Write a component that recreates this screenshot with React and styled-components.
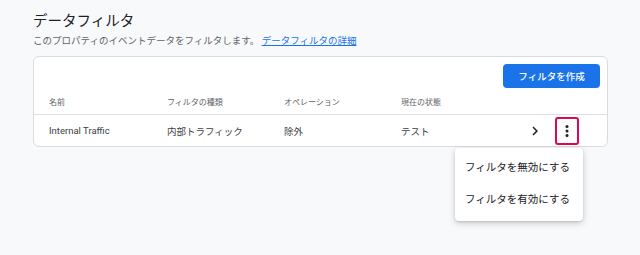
import React from "react";
import styled, { createGlobalStyle } from "styled-components";

const GlobalStyle = createGlobalStyle`
  html, body {
    margin: 0;
    padding: 0;
    background: #f8f9fa;
  }
  body {
    font-family: Roboto, "Noto Sans CJK JP", sans-serif;
    color: #202124;
  }
`;

const Page = styled.div`
  padding: 12px 0 0 33px;
  height: 243px;
`;

const Title = styled.h1`
  margin: 0;
  font-size: 14.5px;
  line-height: 20px;
  font-weight: 400;
  color: #202124;
`;

const Subtitle = styled.p`
  margin: 2px 0 0;
  font-size: 9.5px;
  line-height: 14px;
  color: #5f6368;
`;

const DocLink = styled.a`
  color: #1a73e8;
  text-decoration: underline;
`;

const Card = styled.div`
  margin-top: 8px;
  width: 575px;
  box-sizing: border-box;
  background: #fff;
  border: 1px solid #dadce0;
  border-radius: 6px;
`;

const Toolbar = styled.div`
  display: flex;
  justify-content: flex-end;
  padding: 7px 7px 0;
`;

const PrimaryButton = styled.button`
  height: 24px;
  width: 97px;
  border: none;
  border-radius: 4px;
  background: #1a73e8;
  color: #fff;
  font-family: inherit;
  font-size: 9.5px;
  font-weight: 500;
  cursor: pointer;
`;

const Row = styled.div`
  display: grid;
  grid-template-columns: 118px 117px 117px 1fr auto;
  align-items: center;
  padding: 0 28px 0 15px;
  height: ${(p) => (p.$head ? "26px" : "31px")};
  border-bottom: ${(p) => (p.$head ? "1px solid #e0e0e0" : "none")};
  font-size: ${(p) => (p.$head ? "8px" : "9.5px")};
  color: ${(p) => (p.$head ? "#5f6368" : "#3c4043")};
`;

const Cell = styled.div`
  white-space: nowrap;
`;

const Actions = styled.div`
  display: flex;
  align-items: center;
  gap: 11px;
`;

const IconBox = styled.span`
  display: flex;
  align-items: center;
  justify-content: center;
  width: 18px;
  height: 18px;
  color: #202124;
`;

const MenuAnchor = styled.div`
  position: relative;
`;

const KebabButton = styled.button`
  display: flex;
  align-items: center;
  justify-content: center;
  width: 24px;
  height: 28px;
  padding: 0;
  box-sizing: border-box;
  border: 2px solid #dc0a4f;
  border-radius: 3px;
  background: #fff;
  color: #202124;
  cursor: pointer;
`;

const Menu = styled.ul`
  position: absolute;
  top: calc(100% + 3px);
  right: -4px;
  width: 128px;
  margin: 0;
  padding: 4px 0 5px;
  list-style: none;
  background: #fff;
  border-radius: 4px;
  box-shadow: 0 2px 6px rgba(60, 64, 67, 0.25), 0 1px 2px rgba(60, 64, 67, 0.15);
  z-index: 2;
`;

const MenuItem = styled.li`
  padding: 0 10px;
  line-height: 32px;
  font-size: 10.5px;
  color: #202124;
  white-space: nowrap;
`;

const Chevron = () => (
  <svg width="18" height="18" viewBox="0 0 24 24" fill="currentColor">
    <path d="M10 6 8.59 7.41 13.17 12l-4.58 4.59L10 18l6-6z" />
  </svg>
);

const MoreVert = () => (
  <svg width="18" height="18" viewBox="0 0 24 24" fill="currentColor">
    <circle cx="12" cy="6" r="2" />
    <circle cx="12" cy="12" r="2" />
    <circle cx="12" cy="18" r="2" />
  </svg>
);

const filters = [
  { name: "Internal Traffic", type: "内部トラフィック", op: "除外", state: "テスト" },
];

export default function App() {
  return (
    <Page>
      <GlobalStyle />
      <Title>データフィルタ</Title>
      <Subtitle>
        このプロパティのイベントデータをフィルタします。 <DocLink href="#">データフィルタの詳細</DocLink>
      </Subtitle>
      <Card>
        <Toolbar>
          <PrimaryButton>フィルタを作成</PrimaryButton>
        </Toolbar>
        <Row $head>
          <Cell>名前</Cell>
          <Cell>フィルタの種類</Cell>
          <Cell>オペレーション</Cell>
          <Cell>現在の状態</Cell>
          <Cell />
        </Row>
        {filters.map((f) => (
          <Row key={f.name}>
            <Cell>{f.name}</Cell>
            <Cell>{f.type}</Cell>
            <Cell>{f.op}</Cell>
            <Cell>{f.state}</Cell>
            <Actions>
              <IconBox>
                <Chevron />
              </IconBox>
              <MenuAnchor>
                <KebabButton aria-label="その他">
                  <MoreVert />
                </KebabButton>
                <Menu>
                  <MenuItem>フィルタを無効にする</MenuItem>
                  <MenuItem>フィルタを有効にする</MenuItem>
                </Menu>
              </MenuAnchor>
            </Actions>
          </Row>
        ))}
      </Card>
    </Page>
  );
}
